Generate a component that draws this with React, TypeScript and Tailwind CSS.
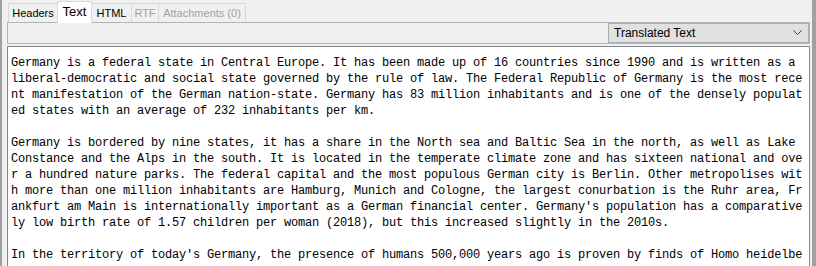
const tabs = [
  { label: "Headers", active: false, disabled: false, w: "w-[50px]" },
  { label: "Text", active: true, disabled: false, w: "w-[35px]" },
  { label: "HTML", active: false, disabled: false, w: "w-[41px]" },
  { label: "RTF", active: false, disabled: true, w: "w-[28px]" },
  { label: "Attachments (0)", active: false, disabled: true, w: "w-[88px]" },
]

const lines = [
  "Germany is a federal state in Central Europe. It has been made up of 16 countries since 1990 and is written as a",
  "liberal-democratic and social state governed by the rule of law. The Federal Republic of Germany is the most rece",
  "nt manifestation of the German nation-state. Germany has 83 million inhabitants and is one of the densely populat",
  "ed states with an average of 232 inhabitants per km.",
  "",
  "Germany is bordered by nine states, it has a share in the North sea and Baltic Sea in the north, as well as Lake",
  "Constance and the Alps in the south. It is located in the temperate climate zone and has sixteen national and ove",
  "r a hundred nature parks. The federal capital and the most populous German city is Berlin. Other metropolises wit",
  "h more than one million inhabitants are Hamburg, Munich and Cologne, the largest conurbation is the Ruhr area, Fr",
  "ankfurt am Main is internationally important as a German financial center. Germany's population has a comparative",
  "ly low birth rate of 1.57 children per woman (2018), but this increased slightly in the 2010s.",
  "",
  "In the territory of today's Germany, the presence of humans 500,000 years ago is proven by finds of Homo heidelbe",
]

export default function App() {
  return (
    <div className="flex h-[266px] w-[816px] overflow-hidden border-l-2 border-r-4 border-[#a0a0a0] bg-[#f0f0f0] font-['Liberation_Sans',Arial,sans-serif]">
      <div className="flex flex-1 flex-col pl-[5px] pr-[2px]">
        {/* Tab strip */}
        <div className="flex h-[22px] items-end pl-[2px]">
          {tabs.map((t) =>
            t.active ? (
              <div
                key={t.label}
                className={`relative z-10 -mb-px -ml-px flex h-[22px] ${t.w} justify-center border border-b-0 border-[#d9d9d9] bg-white pt-[2px] text-[13px] leading-[15px] text-black`}
              >
                {t.label}
              </div>
            ) : (
              <div
                key={t.label}
                className={`-ml-px flex h-[19px] ${t.w} items-center justify-center border border-b-0 border-[#d9d9d9] bg-[#f0f0f0] text-[11px] leading-[14px] ${
                  t.disabled ? "text-[#a0a0a0]" : "text-black"
                }`}
              >
                {t.label}
              </div>
            )
          )}
        </div>

        {/* Toolbar panel */}
        <div className="flex h-[22px] items-center justify-end border border-[#b4b4b4] bg-[#f0f0f0]">
          <div className="flex h-[20px] w-[201px] items-center justify-between border border-[#adadad] bg-[#e1e1e1] pl-[5px] pr-[5px] text-[12px] text-black">
            <span>Translated Text</span>
            <svg width="9" height="6" viewBox="0 0 9 6" className="mr-[1px]">
              <path d="M0.5 0.5 L4.5 4.5 L8.5 0.5" fill="none" stroke="#404040" strokeWidth="1" />
            </svg>
          </div>
        </div>

        {/* Text body */}
        <div className="mt-[2px] flex-1 border border-b-0 border-[#828790] bg-white pl-[3px] pt-[8px]">
          {lines.map((l, i) => (
            <div
              key={i}
              className="h-[16px] whitespace-pre font-['Liberation_Mono','Courier_New',monospace] text-[12px] leading-[16px] tracking-[-0.2px] text-black"
            >
              {l}
            </div>
          ))}
        </div>
      </div>
    </div>
  )
}
